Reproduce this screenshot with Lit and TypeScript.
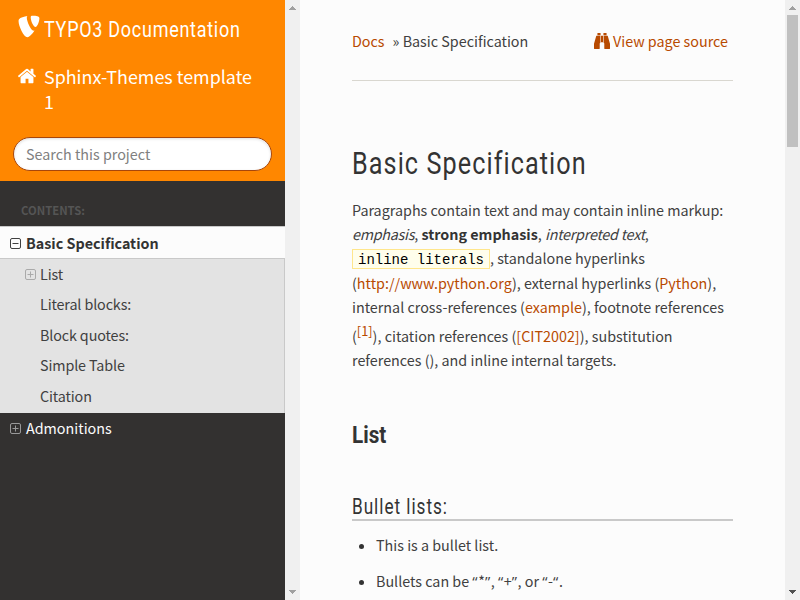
import { LitElement, html, css } from "lit";
import { customElement, property } from "lit/decorators.js";

@customElement("scroll-track")
class ScrollTrack extends LitElement {
  @property({ type: Boolean }) active = false;
  static styles = css`
    :host { display: flex; flex-direction: column; justify-content: space-between; width: 15px; height: 600px; background: #f0f0f0; flex: none; }
    .arrow { display: block; width: 15px; height: 15px; fill: #a0a0a0; flex: none; }
    .on { fill: #505050; }
    .thumb { width: 11px; height: 132px; margin: 0 2px; background: #c0c0c0; }
    .space { flex: 1; }
  `;
  render() {
    return html`
      <svg class="arrow" viewBox="0 0 15 15" shape-rendering="crispEdges"><path d="M7 6h1v1h1v1h1v1h1v1H4V9h1V8h1V7h1z"/></svg>
      ${this.active ? html`<div class="thumb"></div>` : ""}
      <div class="space"></div>
      <svg class="arrow ${this.active ? "on" : ""}" viewBox="0 0 15 15" shape-rendering="crispEdges"><path d="M4 5h7v1h-1v1H9v1H8v1H7V8H6V7H5V6H4z"/></svg>
    `;
  }
}

@customElement("app-root")
class AppRoot extends LitElement {
  static styles = css`
    :host { display: flex; width: 800px; height: 600px; overflow: hidden; background: #fcfcfc; color: #404040; font-family: "Noto Sans CJK SC", sans-serif; font-size: 14.33px; line-height: 24px; white-space: nowrap; }
    * { box-sizing: border-box; }
    nav { width: 285px; height: 600px; background: #333130; flex: none; }
    .head { height: 181px; background: #ff8700; color: #fff; padding: 15px 13px 0 18px; }
    .brand { display: flex; height: 28px; }
    .logo { width: 22px; height: 23px; fill: #fff; margin-right: 4px; flex: none; }
    .share { display: inline-block; font-family: Roboto, sans-serif; transform-origin: 0 50%; }
    .brandname { font-size: 22.5px; line-height: 28px; letter-spacing: .9px; transform: scaleX(.8); }
    .project { display: flex; margin-top: 21px; font-size: 17.9px; line-height: 25px; height: 50px; }
    .home { width: 20px; height: 20px; margin: 2px 7px 0 -1px; fill: #fff; flex: none; }
    .search { margin: 23px 0 0 -5px; width: 259px; height: 34px; border: 1px solid #a8460a; border-radius: 17px; background: #fff; box-shadow: inset 0 1px 3px #ddd; color: #808080; padding-left: 12px; line-height: 32px; }
    .caption { height: 45px; padding: 14px 0 0 21px; line-height: 30px; font-size: 11.3px; font-weight: 700; color: #555; }
    .row { display: flex; align-items: center; height: 30px; padding-left: 10px; color: #fcfcfc; }
    .current { height: 33px; background: #fcfcfc; color: #333; font-weight: 700; border-top: 1px solid #c9c9c9; border-bottom: 1px solid #c9c9c9; }
    .box { width: 11px; height: 11px; margin: 1px 5px 0 0; fill: none; stroke: #404040; flex: none; }
    .dim { stroke: #999; }
    .sub { height: 154px; background: #e3e3e3; border-right: 1px solid #c9c9c9; color: #404040; }
    .item { display: flex; align-items: center; height: 30.6px; padding-left: 40px; letter-spacing: -.12px; }
    .item:not(.nested) { position: relative; top: -.8px; }
    .nested { padding-left: 25px; }
    .nested .box { margin-right: 4px; stroke: #aaa; }
    main { width: 485px; padding: 29px 52px 0; flex: none; overflow: hidden; height: 600px; }
    .crumbs { display: flex; height: 52px; border-bottom: 1px solid #d9d7d0; padding-right: 5px; }
    .src { margin-left: auto; display: flex; }
    .bino { width: 16px; height: 16px; margin: 4px 3px 0 0; fill: #b84a00; }
    .gap { margin-left: 8px; }
    a { color: #b84a00; }
    h1, h2, h3, p, ul { margin: 0; font-weight: 400; }
    h1 { height: 40px; margin-top: 59px; font-size: 31.5px; line-height: 40px; color: #333; }
    .h1t { letter-spacing: 1.35px; transform: scaleX(.8); }
    .para { margin-top: 17.5px; }
    .line { height: 24.4px; line-height: 24.4px; }
    .raised { height: 28.9px; line-height: 33.6px; }
    .it { font-style: italic; letter-spacing: -.25px; }
    b { font-weight: 700; color: #333; }
    .code { display: inline-block; height: 20px; line-height: 20px; border: 1px solid #ffe68c; background: #fffeec; color: #000; font-family: "Liberation Mono", monospace; font-size: 14px; padding: 0 5px; width: 138px; vertical-align: top; margin-top: 3px; }
    .sup { font-size: 12.8px; position: relative; top: -6px; }
    h2 { margin-top: 48.6px; height: 28px; line-height: 28px; font-family: Roboto, sans-serif; font-weight: 700; font-size: 23.5px; color: #333; }
    .h2t { transform: scaleX(.88); }
    h3 { margin-top: 43px; height: 29px; line-height: 26px; border-bottom: 2px solid #c9c9c9; font-size: 21.5px; color: #333; }
    .h3t { letter-spacing: 1.2px; transform: scaleX(.8); }
    ul { list-style: none; padding: 12px 0 0 7px; }
    li { display: flex; align-items: center; height: 24px; margin-bottom: 12px; }
    .q { font-family: "Open Sans", sans-serif; font-size: 15px; letter-spacing: .6px; }
    .dot { width: 5px; height: 5px; border-radius: 50%; background: #333; margin: 2px 12px 0 0; }
  `;

  box(plus: boolean, cls = "") {
    return html`<svg class="box ${cls}" viewBox="0 0 11 11"><rect x=".5" y=".5" width="10" height="10" rx="1.5"/><path d=${plus ? "M2.5 5.5h6M5.5 2.5v6" : "M2.5 5.5h6"}/></svg>`;
  }

  render() {
    return html`
      <nav>
        <div class="head">
          <div class="brand">
            <svg class="logo" viewBox="0 17 448 478"><path d="M178.7 78.4c0-24.7 5.4-32.4 13.9-39.4-69.5 8.5-149.3 34-176.3 66.4-5.4 7.7-9.3 20.8-9.3 37.1C7 246 113.8 480 191.1 480c36.3 0 97.3-59.5 146.7-139-7 2.3-11.6 2.3-18.5 2.3-57.2 0-140.6-198.5-140.6-264.9zM301.5 32c-30.1 0-41.7 5.4-41.7 36.3 0 66.4 53.8 198.5 101.7 198.5 26.3 0 78.8-99.7 78.8-182.3 0-40.9-67-52.5-138.8-52.5z"/></svg>
            <span class="share brandname">TYPO3 Documentation</span>
          </div>
          <div class="project">
            <svg class="home" viewBox="0 0 1792 1792"><path d="M1472 992v480q0 26-19 45t-45 19h-384v-384h-256v384h-384q-26 0-45-19t-19-45v-480q0-1 .5-3t.5-3l575-474 575 474q1 2 1 6zm223-69l-62 74q-8 9-21 11h-3q-13 0-21-7l-692-577-692 577q-12 8-24 7-13-2-21-11l-62-74q-8-10-7-23.5t11-21.5l719-599q32-26 76-26t76 26l244 204v-195q0-14 9-23t23-9h192q14 0 23 9t9 23v408l219 182q10 8 11 21.5t-7 23.5z"/></svg>
            <span>Sphinx-Themes template<br>1</span>
          </div>
          <div class="search">Search this project</div>
        </div>
        <div class="caption">CONTENTS:</div>
        <div class="row current">${this.box(false)}Basic Specification</div>
        <div class="sub">
          <div class="item nested">${this.box(true, "dim")}List</div>
          ${["Literal blocks:", "Block quotes:", "Simple Table", "Citation"].map((t) => html`<div class="item">${t}</div>`)}
        </div>
        <div class="row">${this.box(true, "dim")}Admonitions</div>
      </nav>
      <scroll-track></scroll-track>
      <main>
        <div class="crumbs">
          <a>Docs</a><span class="gap">» Basic Specification</span>
          <a class="src"><svg class="bino" viewBox="0 0 1792 1792"><path d="M704 320v768q0 26-19 45t-45 19v576q0 26-19 45t-45 19H64q-26 0-45-19t-19-45v-512l249-873q7-23 31-23zM1024 320v704H768V320zM1792 1216v512q0 26-19 45t-45 19h-512q-26 0-45-19t-19-45v-576q-26 0-45-19t-19-45V320h424q24 0 31 23zM736 32v224H384V32q0-14 9-23t23-9h288q14 0 23 9t9 23zM1408 32v224h-352V32q0-14 9-23t23-9h288q14 0 23 9t9 23z"/></svg>View page source</a>
        </div>
        <h1><span class="share h1t">Basic Specification</span></h1>
        <div class="para">
          <div class="line">Paragraphs contain text and may contain inline markup:</div>
          <div class="line"><span class="it">emphasis</span>, <b>strong emphasis</b>, <span class="it">interpreted text</span>,</div>
          <div class="line"><span class="code">inline literals</span>, standalone hyperlinks</div>
          <div class="line">(<a>http://www.python.org</a>), external hyperlinks (<a>Python</a>),</div>
          <div class="line">internal cross-references (<a>example</a>), footnote references</div>
          <div class="line raised">(<a class="sup">[1]</a>), citation references (<a>[CIT2002]</a>), substitution</div>
          <div class="line">references (), and inline internal targets.</div>
        </div>
        <h2><span class="share h2t">List</span></h2>
        <h3><span class="share h3t">Bullet lists:</span></h3>
        <ul>
          <li><span class="dot"></span>This is a bullet list.</li>
          <li><span class="dot"></span><span>Bullets can be <span class="q">“</span>*<span class="q">”</span>, <span class="q">“</span>+<span class="q">”</span>, or <span class="q">“</span>-<span class="q">“</span>.</span></li>
        </ul>
      </main>
      <scroll-track active></scroll-track>
    `;
  }
}
